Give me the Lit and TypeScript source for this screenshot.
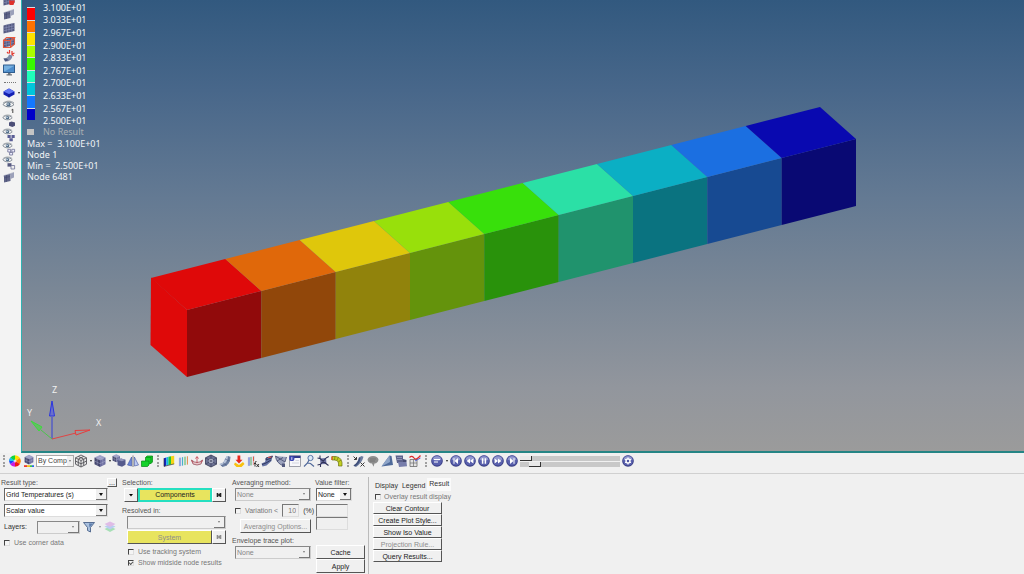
import { LitElement, html, svg, css, TemplateResult } from "lit";
import { customElement, state } from "lit/decorators.js";

const LEGEND_COLORS = ["#ff0000", "#ff7200", "#ffe300", "#aaff00", "#38f900", "#1fffba", "#00c6dc", "#1478ff", "#0000c8"];
const LEGEND_VALUES = ["3.100E+01", "3.033E+01", "2.967E+01", "2.900E+01", "2.833E+01", "2.767E+01", "2.700E+01", "2.633E+01", "2.567E+01", "2.500E+01"];

// Top and front shades of each contour band, hot to cold.
const BANDS: [string, string][] = [
  ["#df0909", "#910a0b"],
  ["#e0680a", "#91470a"],
  ["#dfc70b", "#91830c"],
  ["#98e00b", "#64930c"],
  ["#38e00b", "#29920b"],
  ["#2be0a6", "#20936d"],
  ["#0bafc4", "#0a7380"],
  ["#1b6fe1", "#174a92"],
  ["#0909b0", "#090973"],
];

const cube = (top = "#9a9cc4", left = "#45476f", right = "#6c6ea0") => svg`
  <path d="M7 1 12.500 3.600 7 6.300 1.500 3.600z" fill=${top}/>
  <path d="M1.500 3.600 7 6.300V13L1.500 10.200z" fill=${left}/>
  <path d="M12.500 3.600 7 6.300V13l5.500-2.800z" fill=${right}/>
  <path d="M4.200 2.300 9.800 5v6.600M9.800 2.300 4.200 5v6.600M1.500 7 7 9.700 12.500 7" fill="none" stroke="#b9bbd8" stroke-width=".4"/>`;

const slab = svg`
  <path d="M1.500 4.500 4.500 3.200 12.500 1.800 9 3.800z" fill="#c3c7d8"/>
  <path d="M1.500 4.500 12.500 2v8L1.500 12.500z" fill="#53587f"/>
  <path d="M4.200 4v8M7 3.400v8M9.800 2.800v8M1.500 7.200l11-2.500M1.500 9.800l11-2.500" fill="none" stroke="#8f95bd" stroke-width=".6"/>`;

const eye = svg`
  <path d="M1 4.500C3 1.200 9 1 12 4.500 9 7.600 4 7.600 1 4.500z" fill="#f6f6f6" stroke="#77818c" stroke-width="1"/>
  <path d="M1 3.200C4 .6 9 .4 12 3" fill="none" stroke="#9aa1a8" stroke-width="1"/>
  <circle cx="6.500" cy="4.400" r="2.100" fill="#54708c"/><circle cx="6" cy="4" r=".8" fill="#dfe9f2"/>`;

const disc = (glyph: TemplateResult) => svg`
  <circle cx="7" cy="7" r="5.800" fill="#383d85"/><circle cx="7" cy="6.600" r="5" fill="#5960ad"/>
  <path d="M2.600 5.600a4.600 4.600 0 0 1 8.800 0 9 9 0 0 1-8.800 0z" fill="#9398cf"/>${glyph}`;

const ICONS: Record<string, TemplateResult> = {
  slabCut: svg`<path d="M1.500 5.200 12 2v1.800L1.500 7z" fill="#b9bdcc"/><path d="M2 5.800 8.500 4v7L2 12.500z" fill="#5f6487"/><path d="M8.500 4 12 2.500v5L8.500 9z" fill="#9ca1ba"/><path d="M2 8l6-1.500M4.500 5.200v6.500" stroke="#454a70" stroke-width=".6"/>`,
  slabRed: svg`${slab}<path d="M7 7.500h6L11.500 12H7.500z" fill="#e0322c"/>`,
  slab,
  slabFrame: svg`${slab}<path d="M1.500 5.500h7v7h-7zM1.500 5.500l3-3h8l-4 3M8.500 12.500 12.500 9V2.500" fill="none" stroke="#e4573d" stroke-width="1.100"/>`,
  bracketMark: svg`<path d="M1.500 9.500Q6 9.500 7 5.500l3.500 1Q10 12.500 3 12.500z" fill="#7f8aa8"/><path d="M1.500 9.500h3l2 1.500-3 1.500z" fill="#46527c"/><path d="M7.500 1v3.500M10 2v3l2.500-1M10 5l1.500 2M5 3l1.500 1.500" stroke="#e2382e" stroke-width="1.200" fill="none"/>`,
  monitor: svg`<rect x="1" y="1.500" width="12" height="8.500" rx=".6" fill="#2f5d8f"/><rect x="2" y="2.500" width="10" height="6.200" fill="#76b0e0"/><path d="M2 8.700 12 3v5.700z" fill="#4c8ccb"/><path d="M6 10h2.500v1.200H10v1.300H4.500v-1.300H6z" fill="#6d747c"/>`,
  gem: svg`<path d="M7 2.500 12.500 5.500v3L7 11.500 1.500 8.500v-3z" fill="#1420b4"/><path d="M7 2.500 12.500 5.500 7 8 1.500 5.500z" fill="#5d72f2"/><path d="M7 8v3.500" stroke="#070d6b" stroke-width=".6"/>`,
  eyeOne: svg`${eye}<path d="M9.500 10 10.800 9.200V13" stroke="#444" stroke-width="1" fill="none"/>`,
  eyeCube: svg`<g transform="scale(.85)">${eye}</g><path d="M7 8.500 9.500 7.500 13 8.500v3.200L10.400 13 7 11.700z" fill="#4c4f78"/>`,
  eyeCubes: svg`<g transform="scale(.85)">${eye}</g><path d="M5.500 7h3.200v3H5.500zM9.500 7h3.200v3H9.500zM7.400 10.300h3.400v3H7.400z" fill="#5a5e96"/>`,
  eyeWire: svg`<g transform="scale(.85)">${eye}</g><path d="M5.800 7.300h2.800V10H5.800zM9.800 7.300h2.800V10H9.800zM7.600 10.500h3V13h-3z" fill="#eef" stroke="#6d7096" stroke-width=".8"/>`,
  eyeSwap: svg`<g transform="scale(.85)">${eye}</g><path d="M5.500 7.200h4v3.400h-4z" fill="#55597f"/><path d="M9 9.500h3.600V13H9z" fill="#eee" stroke="#6d7096" stroke-width=".8"/>`,
  wheel: svg`<path d="M7 7V1.200A5.800 5.800 0 0 1 12 4z" fill="#ffe000"/><path d="M7 7l5-3a5.800 5.800 0 0 1 0 6z" fill="#ff8a00"/><path d="M7 7l5 3a5.800 5.800 0 0 1-5 2.800z" fill="#f01818"/><path d="M7 7v5.800A5.800 5.800 0 0 1 2 10z" fill="#c91ee0"/><path d="M7 7 2 10a5.800 5.800 0 0 1 0-6z" fill="#1f3cff"/><path d="M7 7 2 4a5.800 5.800 0 0 1 5-2.800z" fill="#15d33b"/><path d="M7 7 1.200 7A5.800 5.800 0 0 1 2.400 3.500z" fill="#14c9e8"/><circle cx="7" cy="7" r="1.500" fill="#fff" fill-opacity=".7"/>`,
  cubeBar: svg`<g transform="translate(1.400 0) scale(.8)">${cube()}</g><path d="M2 11.200h3V13H2z" fill="#ef3b2c"/><path d="M5 11.200h3V13H5z" fill="#f2c51c"/><path d="M8 11.200h2V13H8z" fill="#3bc54a"/><path d="M10 11.200h2V13h-2z" fill="#2a68e8"/>`,
  wire: svg`<path d="M7 1 12.500 3.800v6.400L7 13 1.500 10.200V3.800zM1.500 3.800 7 6.500l5.500-2.700M7 6.500V13M4.200 2.400l5.500 2.700v6.400M9.800 2.400 4.300 5.100v6.500M1.500 7 7 9.800 12.500 7" fill="#e4e4e4" stroke="#57575c" stroke-width=".9"/>`,
  cube: cube(),
  cubes: svg`<g transform="translate(-.5 -.5) scale(.68)">${cube()}</g><path d="M5.500 6 9 4.500l4.500 1.300v5L10 12.800l-4.500-1.600z" fill="#555a8c"/><path d="M5.500 6 9 4.500l4.500 1.300L10 7.200z" fill="#9195bb"/>`,
  mirror: svg`<path d="M5.600 3v9L1.500 11z" fill="#6b86d8" stroke="#3d4f9e" stroke-width=".6"/><path d="M8.400 3v9l4.100-1z" fill="#bccaf2" stroke="#3d4f9e" stroke-width=".6"/><path d="M7 1.500v11.500" stroke="#555" stroke-width=".7"/>`,
  greens: svg`<path d="M1.500 7h4V3.500L7 2h5.500v6L11 9.500H9V11l-1.500 1.500h-6z" fill="#14d32a" stroke="#078716" stroke-width=".7"/><path d="M5.500 7H9V9.500M5.500 3.500H11L12.500 2M11 3.500v6" fill="none" stroke="#078716" stroke-width=".6"/>`,
  contour: svg`<path d="M2 4.200 4.300 3.400v8.200L2 12.400z" fill="#1624c4"/><path d="M4.300 3.400 6.500 2.800V11l-2.200.6z" fill="#14b7e4"/><path d="M6.500 2.800 9 2.300v8.200l-2.500.5z" fill="#28c637"/><path d="M9 2.300 12.200 1.700v8.200L9 10.500z" fill="#f6d417"/><path d="M2 12.400 12.200 9.900M2 4.200v8.200" stroke="#222" stroke-width=".6" fill="none"/>`,
  iso: svg`<path d="M2.500 4 12 2v8.500L2.500 12.500z" fill="#e1e3ec"/><path d="M4 3.700v8.400" stroke="#4b74d8" stroke-width="1"/><path d="M6.500 3.200v8.400" stroke="#45b4c8" stroke-width="1"/><path d="M9 2.700v8.400" stroke="#5cc15b" stroke-width="1"/><path d="M11.500 2.300v8.300" stroke="#e79557" stroke-width="1"/>`,
  vector: svg`<path d="M1.500 6Q7 11 12.500 6L11 10Q7 12 3 10z" fill="#e9c7cb" stroke="#8c4450" stroke-width=".7"/><path d="M7 9V3M5.500 4.600 7 2.500l1.500 2.100M3 8.500 1.500 6.500M11 8.500l1.500-2" stroke="#c03a48" stroke-width=".8" fill="none"/>`,
  tensor: svg`<path d="M7 1 12.500 3.800v6.400L7 13 1.500 10.200V3.800z" fill="#6d7394" stroke="#363a55" stroke-width=".8"/><circle cx="7" cy="7" r="2.800" fill="#dadff0" stroke="#474b70" stroke-width=".7"/><path d="M1.500 3.800 12.500 10.200M12.500 3.800 1.500 10.200M7 1v12" stroke="#363a55" stroke-width=".6"/>`,
  deform: svg`<path d="M1.500 10Q6 9.500 7 5L9 2l3.500.8Q12.500 11.500 4.500 13z" fill="#6c7fa2"/><path d="M1.500 10Q6 9.500 7 5L9 2l1.500.4Q10 10 3 11.500z" fill="#b7c4da"/><path d="M3 11.500Q10 10 10.500 2.400M5 8.800l4 2.700M7 5l4.500 2" fill="none" stroke="#46587e" stroke-width=".6"/>`,
  stream: svg`<path d="M5.500 1.500h2.800v4.200h2.200L7 9.500 3.500 5.700h2z" fill="#e8281c"/><path d="M3 8.500 7 11l4-3 1.500 2-3 3h-5L2 10.500z" fill="#f8c10f"/>`,
  isoFx: svg`<path d="M1.500 3.500 9 1.800v9L1.500 12.300z" fill="#dde0ea"/><path d="M3 3.300v8.500" stroke="#4d66d0"/><path d="M5 2.900v8.500" stroke="#5cb06a"/><path d="M7.500 2.500v8.500" stroke="#dc5b44"/><path d="M7.500 7h5.500v6H7.500z" fill="#ececec"/><path d="M10.500 7.500Q9 7.200 9 9v3.500M8 9.500h2M10.500 10l2.500 3M13 10l-2.500 3" fill="none" stroke="#222" stroke-width=".9"/>`,
  section: svg`<path d="M1.500 9.500 5 8l1-4 6.500-2-1 5-5 4.500-4 1z" fill="#6573a3"/><path d="M6 4l6.500-2-1 2L6 6zM2 10.500l4-1.500 5-3" fill="none" stroke="#242b52" stroke-width=".8"/><path d="M8 3.500 11.500 3" stroke="#e5534b" stroke-width="1.100"/>`,
  dish: svg`<path d="M1.500 2Q2 9 9.500 12L12.500 3z" fill="#9ba2bd"/><path d="M1.500 2Q2 9 9.500 12M1.500 2 11 8 12.500 3M3 7l6-3.500" fill="none" stroke="#41486c" stroke-width=".8"/><path d="M8 9.500h3V13H8z" fill="#52597e"/>`,
  sheet: svg`<rect x="1.500" y="1.800" width="11" height="10.700" fill="#f7f7fa" stroke="#7a7d8a" stroke-width=".7"/><path d="M1.500 1.800h11v2.200h-11z" fill="#323a8c"/><circle cx="3.800" cy="4.500" r="2.600" fill="#3e49b4"/><path d="M3.800 3.200v2.700" stroke="#fff" stroke-width=".8"/><path d="M7.500 6.500H11M4 9h7" stroke="#c3c6d2" stroke-width=".7"/>`,
  probe: svg`<circle cx="8.500" cy="4" r="2.600" fill="#dbe9f7" stroke="#5874a5" stroke-width="1"/><path d="M7 6 5.500 9 2 12.500M5.500 9l3 .5 3.500 3" stroke="#526a9b" stroke-width="1.200" fill="none"/>`,
  node: svg`<path d="M4 4.500 10 4l.5 6-6 .3z" fill="#6b6fa0"/><path d="M4 1.500V4.500L1.500 4M10 4l2.800-1.500M10.500 10l2 1.500M4.500 10.300V13M4.500 10.300 1.500 11M10 4 4.500 10.300M4 4.500l6.500 5.500" stroke="#31345a" stroke-width="1.100" fill="none"/>`,
  hose: svg`<path d="M2 2.500Q11 1.500 12 8.500V12H8.500V9Q8 5.500 2 6z" fill="#c3cf22" stroke="#6c7212" stroke-width=".7"/><path d="M5 2.500 4.500 6M8.300 3.500 6.800 6.500M11 6 8.300 8" stroke="#6c7212" stroke-width=".7"/><path d="M2 2.500v3.500" stroke="#e3532b" stroke-width="1.300"/>`,
  measure: svg`<path d="M1.500 11.500Q6 9 7 3.500L9.500 2l2 .8Q10 9 4 13z" fill="#6d7d9f"/><path d="M1.500 11.500Q6 9 7 3.500L8.500 3.800Q8 10 3 12.500z" fill="#40507a"/><path d="M1.500 2.500 4.500 5.500M4.500 3v2.500H2M8.500 8.500l4 4M12.500 8.500l-4 4" stroke="#3b3b3b" stroke-width="1" fill="none"/>`,
  note: svg`<path d="M1.500 5.500Q2.500 2 7 2t5.500 3.500Q12 9.200 8.500 9.500L7.500 12.800 6 9.500Q2 9.200 1.500 5.500z" fill="#8d8d8d"/><path d="M4 5h6M4 7h5" stroke="#6e6e6e" stroke-width=".7"/>`,
  wing: svg`<path d="M1.500 12.500 9.500 1.500l2 .5 1.500 9z" fill="#4f6a9a"/><path d="M1.500 12.500 9.500 1.500l.5 6.500z" fill="#8ea5c8"/>`,
  cache: svg`<path d="M1.500 1.500h7.500V9H3z" fill="#5d628b"/><path d="M3 3.500h5M3 5.500h5" stroke="#afb3d0" stroke-width=".6"/><path d="M4 8h8.500l.5 4.200-8 .8z" fill="#777dab"/><path d="M9 5l3.500 1v2H9z" fill="#474c74"/>`,
  plot: svg`<path d="M2 5.500h7v7H2z" fill="#e3e3e3" stroke="#6d6d6d" stroke-width=".8"/><path d="M2 9h7M5.500 5.500v7" stroke="#6d6d6d" stroke-width=".7"/><path d="M1.500 3.500Q4 1 6 4t6.500-2.500" stroke="#dd2a2a" stroke-width="1.200" fill="none"/><path d="M7 7 12.500 4" stroke="#3346cf" stroke-width=".8"/>`,
  anim: disc(svg`<path d="M4 5.500h6M4 8h4" stroke="#fff" stroke-width="1"/>`),
  first: disc(svg`<path d="M9 4v6L5.500 7z" fill="#fff"/><path d="M5 4.200v5.600" stroke="#fff"/>`),
  back: disc(svg`<path d="M7 4.400v5.200L3.600 7zM10.400 4.400v5.200L7 7z" fill="#fff"/>`),
  pause: disc(svg`<path d="M5.600 4.200v5.600M8.400 4.200v5.600" stroke="#fff" stroke-width="1.500"/>`),
  forward: disc(svg`<path d="M7 4.400v5.200L10.400 7zM3.600 4.400v5.200L7 7z" fill="#fff"/>`),
  last: disc(svg`<path d="M5 4v6L8.500 7z" fill="#fff"/><path d="M9 4.200v5.600" stroke="#fff"/>`),
  gear: disc(svg`<circle cx="7" cy="7" r="2" fill="none" stroke="#fff" stroke-width="1.400"/><path d="M7 3.400v7.200M3.900 5.200l6.200 3.600M10.100 5.200 3.900 8.800" stroke="#fff" stroke-width="1"/><circle cx="7" cy="7" r="1.200" fill="#4d539f"/>`),
  funnel: svg`<path d="M1.500 2.500h11L8.500 7.500V12L5.500 10.500v-3z" fill="#a9c0de" stroke="#4a6289" stroke-width=".9"/><path d="M7 3.500h4L7.500 7.500z" fill="#5d7dac"/>`,
  layers: svg`<path d="M7 6.500 12.500 9 7 12 1.500 9z" fill="#a7dfb6"/><path d="M7 4 12.500 6.500 7 9.500 1.500 6.500z" fill="#b9cdf0"/><path d="M7 1.500 12.500 4 7 7 1.500 4z" fill="#dfbce6"/>`,
};

const icon = (name: string) => html`<svg class="icon" viewBox="0 0 14 14" aria-hidden="true">${ICONS[name]}</svg>`;
const tool = (name: string) => html`<button class="tool" aria-label=${name}>${icon(name)}</button>`;
const drop = () => html`<span class="drop"></span>`;
const grip = () => html`<span class="grip"></span>`;
const pick = (label: string, value: string, cls = "", off = false) => html`
  <span class="pick ${cls}"><select aria-label=${label} ?disabled=${off}><option>${value}</option></select><i class="arrow"></i></span>`;

@customElement("app-root")
export class AppRoot extends LitElement {
  @state() private tab = "Result";

  static styles = css`
    * { box-sizing: border-box; }
    :host {
      display: flex; flex-direction: column; height: 100vh; overflow: hidden;
      background: #f0f0f0; color: #333;
      font: 7px/10px "Liberation Sans", Arial, sans-serif;
    }
    button, select, input { font: inherit; color: inherit; margin: 0; padding: 0; border-radius: 0; }
    .stage { flex: 1; min-height: 0; display: flex; }
    .rail { width: 21px; overflow: hidden; display: flex; flex-direction: column; align-items: flex-start; padding-left: 2px; background: #f3f3f3; }
    .rail .first { margin-top: -7px; }
    .rail .row { display: flex; align-items: center; }
    .dots { width: 12px; height: 2px; margin: 5px 2px 2px; border-top: 1px dotted #777; flex: none; }
    .tool { width: 14px; height: 14px; border: 0; background: none; display: block; flex: none; }
    .icon { width: 14px; height: 14px; display: block; flex: none; }
    .drop { width: 5px; height: 14px; display: flex; align-items: center; justify-content: center; flex: none; }
    .drop::before { content: ""; border: 1px solid transparent; border-top: 2px solid #222; border-bottom: 0; }
    .canvas {
      flex: 1; min-width: 0; position: relative; border-left: 1px solid #2fb2b2; border-bottom: 2px solid #258585;
      background: linear-gradient(#32597f, #48678a 20%, #647a93 44%, #7a8796 64%, #92969d 86%, #9b9b9b);
    }
    .model { width: 100%; height: 100%; display: block; }
    .legend { position: absolute; top: 1px; left: 5px; color: #f2f4f6; font: 9px/11px "Noto Sans", sans-serif; }
    .scale { display: flex; }
    .ramp { width: 8px; height: 113px; margin-top: 6px; display: flex; flex-direction: column; }
    .ramp span { flex: 1; border-top: 1px solid #d9dde0; }
    .values { display: flex; flex-direction: column; height: 126px; margin-left: 8px; line-height: 9px; }
    .values span { flex: 1; display: flex; align-items: center; }
    .none { display: flex; align-items: center; gap: 9px; line-height: 9px; color: #a9aeb2; }
    .none i { width: 7px; height: 6px; background: #c4c4c4; }
    .stats { margin-top: 2px; white-space: pre; }
    .axes { position: absolute; left: 1px; bottom: 6px; width: 90px; height: 64px; font: 9px "Noto Sans", sans-serif; }
    .toolbar { display: flex; align-items: center; height: 21px; padding-bottom: 4px; border-bottom: 1px solid #d0d0d0; }
    .grip { width: 8px; height: 12px; flex: none; display: flex; justify-content: center; }
    .grip::before { content: ""; border-left: 2px dotted #a0a0a0; }
    .sliders { width: 100px; display: flex; flex-direction: column; gap: 1px; margin: 0 1px; }
    .sliders input { appearance: none; width: 100%; height: 5px; background: #c8c8c8; display: block; }
    .sliders input::-webkit-slider-thumb { appearance: none; width: 12px; height: 5px; background: #e9e9e9; border: solid #333; border-width: 0 1px 1px 0; }
    .pick { display: flex; position: relative; height: 13px; }
    .pick select { appearance: none; flex: 1; min-width: 0; width: 100%; background: #fff; color: #222; border: 1px solid; border-color: #666 #ddd #ddd #666; padding-left: 1px; outline: none; opacity: 1; }
    .pick select:disabled { background: #f0f0f0; color: #858585; border-color: #888 #ccc #ccc #888; }
    .arrow { position: absolute; right: 1px; top: 1px; bottom: 1px; width: 11px; background: #f0f0f0; border: solid #777; border-width: 0 1px 1px 0; pointer-events: none; display: flex; align-items: center; justify-content: center; }
    .arrow::before { content: ""; border: 2px solid transparent; border-top: 3px solid #111; border-bottom: 0; }
    .pick select:disabled + .arrow::before { border-width: 2px 1px 0; border-top-color: #777; }
    .pick.comp { width: 38px; height: 12px; }
    .comp select { border-color: #aaa; color: #444; }
    .comp .arrow { width: 6px; border: 0; }
    .comp .arrow::before { border-width: 2px 1px 0; border-top-color: #777; }
    .panel { display: flex; align-items: flex-start; height: 100px; padding: 3px 0 0 1px; white-space: nowrap; }
    .col { display: flex; flex-direction: column; margin-right: 5px; }
    .body { display: flex; flex-direction: column; padding-left: 3px; }
    .line { display: flex; align-items: center; }
    .head { height: 11px; color: #555; }
    .c1 { width: 116px; }
    .c1 .head { justify-content: space-between; }
    .c1 .body { gap: 3px; }
    .c1 .body > .pick { width: 104px; }
    .c1 .layers { gap: 2px; }
    .layers label { width: 31px; }
    .layers .pick { width: 44px; }
    .layers .drop { opacity: .5; width: 3px; }
    .btn { border: solid; border-width: 1px; border-color: #fff #555 #555 #fff; background: #f0f0f0; color: #222; height: 12px; line-height: 9px; text-align: center; }
    .btn:disabled { color: #8d8d8d; }
    .btn.more { width: 10px; height: 9px; line-height: 5px; }
    .check { display: flex; align-items: center; gap: 4px; height: 11px; color: #777; }
    .check input { appearance: none; width: 6px; height: 6px; border: 1px solid; border-color: #444 #ddd #ddd #444; background: #f4f4f4; display: flex; }
    .check input:checked::before { content: ""; width: 4px; height: 2px; border: solid #555; border-width: 0 0 1px 1px; rotate: -45deg; }
    .c2 { width: 104px; margin-right: 6px; }
    .c2 .body { padding-left: 2px; }
    .square { width: 14px; height: 14px; display: grid; place-items: center; }
    .square svg { width: 6px; height: 6px; display: block; }
    .yellow { flex: 1; height: 14px; background: #e8e45e; }
    .yellow.active { border: 2px solid #25dfc0; line-height: 8px; }
    .c2 .second { margin-top: 3px; }
    .c2 .resolved { padding-left: 5px; }
    .resolved .pick { margin-bottom: 1px; }
    .c2 .checks { padding: 2px 0 0 6px; }
    .c3 { width: 79px; margin-right: 4px; }
    .c3 .body > .line { gap: 4px; height: 13px; margin: 3px 0 2px; }
    .num { width: 17px; height: 13px; text-align: right; padding-right: 2px; border: 1px solid; border-color: #777 #ddd #ddd #777; background: #f0f0f0; color: #777; }
    .c3 .btn { height: 14px; margin-left: 5px; }
    .c3 .second { margin-top: 2px; }
    .c4 { width: 50px; margin-right: 3px; }
    .c4 .body { padding-left: 1px; }
    .c4 .pick { width: 36px; margin-bottom: 3px; }
    .c4 .num { width: 32px; }
    .c4 .btn { height: 14px; }
    .c4 .cache { margin-top: 15px; }
    .c5 { border-left: 1px solid #bbb; padding-left: 4px; align-self: stretch; }
    .tabs { display: flex; height: 14px; padding-top: 1px; align-items: flex-end; }
    .tabs button { border: 0; background: none; padding: 0 2px; height: 11px; color: #333; }
    .tabs button[aria-selected="true"] { background: #fafafa; height: 13px; padding-bottom: 2px; }
    .c5 .stack { display: flex; flex-direction: column; width: 69px; }
    .c5 .check { padding-left: 2px; gap: 3px; }
  `;

  private point(i: number, dx = 0, dy = 0) {
    const x = 165 + (669 * i) / 9 + dx;
    const y = 310 - (171 * i) / 9 + dy;
    return `${x.toFixed(1)},${y.toFixed(1)}`;
  }

  private renderModel() {
    return html`<svg class="model" viewBox="0 0 1002 451" role="img" aria-label="Grid temperature contour">
      <polygon points="129,277.500 165,310 165,377 128.500,345" fill="#df0909"/>
      ${BANDS.map(([top, front], i) => svg`
        <polygon points="${this.point(i)} ${this.point(i + 1)} ${this.point(i + 1, 0, 67)} ${this.point(i, 0, 67)}" fill=${front}/>
        <polygon points="${this.point(i)} ${this.point(i + 1)} ${this.point(i + 1, -36, -32)} ${this.point(i, -36, -32)}" fill=${top}/>`)}
    </svg>`;
  }

  private renderLegend() {
    return html`<div class="legend">
      <div class="scale">
        <div class="ramp">${LEGEND_COLORS.map((c) => html`<span style="background:${c}"></span>`)}</div>
        <div class="values">${LEGEND_VALUES.map((v) => html`<span>${v}</span>`)}</div>
      </div>
      <div class="none"><i></i>No Result</div>
      <div class="stats"><div>Max =  3.100E+01</div><div>Node 1</div><div>Min =  2.500E+01</div><div>Node 6481</div></div>
    </div>`;
  }

  private renderAxes() {
    return html`<svg class="axes" viewBox="0 0 90 64" aria-label="Axes">
      <path d="M29 58V36" stroke="#3540d8" fill="none"/><path d="M29 20 26.500 35h5z" fill="#6a70cc" stroke="#2a35e0"/>
      <path d="M29 58 53 52" stroke="#e04444" fill="none"/><path d="M67 49 52 49.500 53 54z" fill="none" stroke="#e83c3c"/>
      <path d="M29 58 18 49" stroke="#4cc44c" fill="none"/><path d="M8 40 19 46 16 50z" fill="#63c063" stroke="#3bdc3b"/>
      <g fill="#f0f0f0"><text x="29" y="12">Z</text><text x="4" y="35">Y</text><text x="73" y="45">X</text></g>
    </svg>`;
  }

  private renderToolbar() {
    const group = (names: string[]) => names.map(tool);
    return html`<div class="toolbar" role="toolbar">
      ${grip()}${group(["wheel", "cubeBar"])}${pick("Color mode", "By Comp", "comp")}
      ${tool("wire")}${drop()}${tool("cube")}${drop()}${group(["cubes", "mirror", "greens"])}
      ${grip()}${group(["contour", "iso", "vector", "tensor", "deform", "stream", "isoFx", "section", "dish", "sheet", "probe", "node", "hose"])}
      ${grip()}${group(["measure", "note", "wing", "cache", "plot"])}
      ${grip()}${tool("anim")}${drop()}${group(["first", "back", "pause", "forward", "last"])}
      <div class="sliders"><input type="range" aria-label="Frame" value="0"><input type="range" aria-label="Speed" value="10"></div>
      ${tool("gear")}
    </div>`;
  }

  private skip() {
    return html`<svg viewBox="0 0 6 6"><path d="M1.500 1v4M4.500 1v4" stroke="currentColor" stroke-width="1.600"/><path d="M1 3 5 1v4z" fill="currentColor"/></svg>`;
  }

  private renderPanel() {
    const box = (label: string, checked = false) => html`<label class="check"><input type="checkbox" .checked=${checked}>${label}</label>`;
    return html`<div class="panel">
      <div class="col c1">
        <div class="line head">Result type:<button class="btn more">...</button></div>
        <div class="body">
          ${pick("Result type", "Grid Temperatures (s)")}
          ${pick("Component", "Scalar value")}
          <div class="line layers"><label>Layers:</label>${pick("Layers", "", "", true)}${icon("funnel")}${drop()}${icon("layers")}</div>
          ${box("Use corner data")}
        </div>
      </div>
      <div class="col c2">
        <div class="line head">Selection:</div>
        <div class="body">
          <div class="line"><button class="btn square" aria-label="Entity type"><svg viewBox="0 0 6 6"><path d="M1 2h4L3 4.500z"/></svg></button><button class="btn yellow active">Components</button><button class="btn square" aria-label="Reset">${this.skip()}</button></div>
        </div>
        <div class="line head second">Resolved in:</div>
        <div class="body resolved">
          ${pick("Resolved in", "", "", true)}
          <div class="line"><button class="btn yellow" disabled>System</button><button class="btn square" aria-label="Reset system" disabled>${this.skip()}</button></div>
        </div>
        <div class="body checks">${box("Use tracking system")}${box("Show midside node results", true)}</div>
      </div>
      <div class="col c3">
        <div class="line head">Averaging method:</div>
        <div class="body">
          ${pick("Averaging method", "None", "", true)}
          <div class="line">${box("Variation <")}<input class="num" aria-label="Variation" value="10">(%)</div>
          <button class="btn" disabled>Averaging Options...</button>
        </div>
        <div class="line head second">Envelope trace plot:</div>
        <div class="body">${pick("Envelope trace plot", "None", "", true)}</div>
      </div>
      <div class="col c4">
        <div class="line head">Value filter:</div>
        <div class="body">
          ${pick("Value filter", "None")}
          <input class="num" aria-label="Minimum" disabled><input class="num" aria-label="Maximum" disabled>
          <button class="btn cache">Cache</button><button class="btn">Apply</button>
        </div>
      </div>
      <div class="col c5">
        <div class="tabs" role="tablist">${["Display", "Legend", "Result"].map((t) => html`<button role="tab" aria-selected=${String(t === this.tab)} @click=${() => (this.tab = t)}>${t}</button>`)}</div>
        ${box("Overlay result display")}
        <div class="stack">
          ${["Clear Contour", "Create Plot Style...", "Show Iso Value", "Projection Rule...", "Query Results..."].map((t) => html`<button class="btn" ?disabled=${t.startsWith("Projection")}>${t}</button>`)}
        </div>
      </div>
    </div>`;
  }

  render() {
    return html`
      <div class="stage">
        <div class="rail">
          <button class="tool first" aria-label="View">${icon("slabRed")}</button>
          ${["slabCut", "slab", "slabFrame", "bracketMark", "monitor"].map(tool)}
          <span class="dots"></span>
          <div class="row">${tool("gem")}<span class="drop"></span></div>
          ${["eyeOne", "eyeCube", "eyeCubes", "eyeWire", "eyeSwap", "slabCut"].map(tool)}
        </div>
        <div class="canvas">${this.renderModel()}${this.renderLegend()}${this.renderAxes()}</div>
      </div>
      ${this.renderToolbar()}
      ${this.renderPanel()}`;
  }
}
